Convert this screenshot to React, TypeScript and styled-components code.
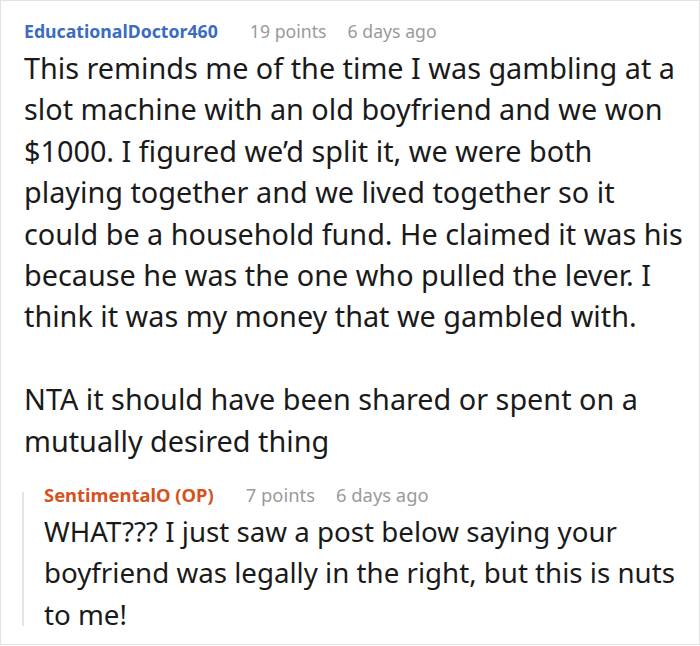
import React from "react";
import styled, { createGlobalStyle } from "styled-components";

const Global = createGlobalStyle`
  html, body { margin: 0; padding: 0; background: #fff; }
  body { font-family: "Noto Sans", "Open Sans", sans-serif; }
`;

const Frame = styled.div`
  box-sizing: border-box;
  width: 700px;
  height: 645px;
  border: 1px solid #e3e3e3;
  padding: 18px 16px 0 23px;
  overflow: hidden;
`;

const Header = styled.div<{ $size: number }>`
  display: flex;
  align-items: baseline;
  gap: 32px;
  height: 24px;
  line-height: 24px;
  font-size: ${(p) => p.$size}px;
`;

const Author = styled.span<{ $op?: boolean }>`
  font-weight: 700;
  color: ${(p) => (p.$op ? "#d4531f" : "#3a6cc0")};
`;

const Meta = styled.span`
  color: #9a9a9a;
  display: flex;
  gap: 21px;
`;

const Body = styled.div<{ $size: number }>`
  font-size: ${(p) => p.$size}px;
  line-height: 41.4px;
  color: #1a1a1a;
  margin-top: 4px;
`;

const Para = styled.p`
  margin: 0;
  & + & { margin-top: 41.4px; }
`;

const Reply = styled.div`
  position: relative;
  margin-top: 22px;
  padding-left: 20px;
  &::before {
    content: "";
    position: absolute;
    left: -2px;
    top: 9px;
    bottom: 9px;
    width: 2px;
    background: #e4e4e4;
  }
`;

function Comment({ author, op, points, ago, size, headSize, children }: { author: string; op?: boolean; points: string; ago: string; size: number; headSize: number; children: React.ReactNode }) {
  return (
    <>
      <Header $size={headSize}>
        <Author $op={op}>{author}</Author>
        <Meta>
          <span>{points}</span>
          <span>{ago}</span>
        </Meta>
      </Header>
      <Body $size={size}>{children}</Body>
    </>
  );
}

export default function App() {
  return (
    <>
      <Global />
      <Frame>
        <Comment author="EducationalDoctor460" points="19 points" ago="6 days ago" size={28.8} headSize={17.7}>
          <Para>
            This reminds me of the time I was gambling at a slot machine with an old boyfriend and we won $1000. I figured we’d split it, we were both playing together and we lived together so it could be a household fund. He claimed it was his because he was the one who pulled the lever. I think it was my money that we gambled with.
          </Para>
          <Para>NTA it should have been shared or spent on a mutually desired thing</Para>
        </Comment>
        <Reply>
          <Comment author="SentimentalO (OP)" op points="7 points" ago="6 days ago" size={27.7} headSize={18.4}>
            <Para>WHAT??? I just saw a post below saying your boyfriend was legally in the right, but this is nuts to me!</Para>
          </Comment>
        </Reply>
      </Frame>
    </>
  );
}
